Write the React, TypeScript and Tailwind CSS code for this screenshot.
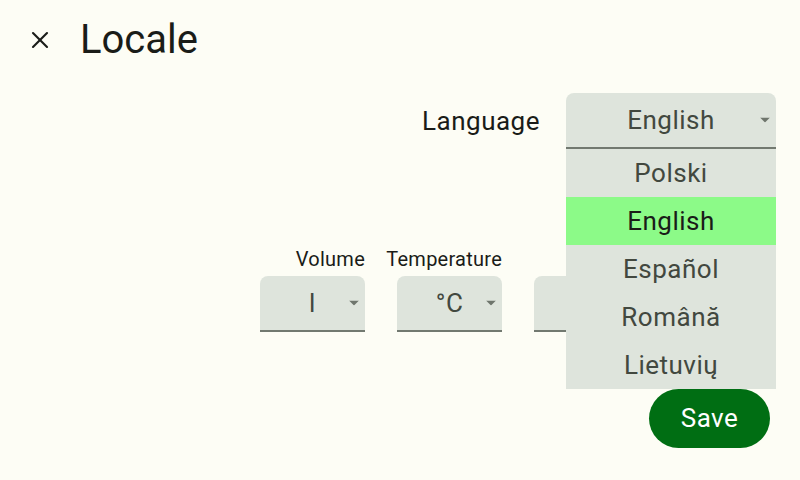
import { X } from "lucide-react";

const languages = ["Polski", "English", "Español", "Română", "Lietuvių"];

const units = [
  { label: "Volume", value: "l" },
  { label: "Temperature", value: "°C" },
  { label: "Length", value: "m" },
  { label: "Weight", value: "kg" },
];

function Caret() {
  return (
    <svg width="10" height="5" viewBox="0 0 10 5" className="absolute right-[6px] top-1/2 -translate-y-1/2">
      <path d="M0 0h10L5 5z" fill="#6f766d" />
    </svg>
  );
}

function Select({ value, width }: { value: string; width: string }) {
  return (
    <div
      className={`relative ${width} h-[56px] bg-[#dee4dc] rounded-t-lg border-b-2 border-[#727970] flex items-center justify-center text-[26px] tracking-[0.5px] text-[#42483f]`}
    >
      <span>{value}</span>
      <Caret />
    </div>
  );
}

export default function App() {
  return (
    <div
      className="w-[800px] h-[480px] bg-[#fdfdf5] text-[#1a1c18] flex flex-col overflow-hidden"
      style={{ fontFamily: "Roboto, 'Liberation Sans', sans-serif" }}
    >
      {/* Header */}
      <div className="flex items-center h-[80px] pl-[26px] gap-[26px] shrink-0">
        <X size={28} strokeWidth={1.8} className="text-[#1a1c18]" />
        <h1 className="text-[40px] leading-none">Locale</h1>
      </div>

      {/* Language */}
      <div className="flex justify-end items-center gap-[26px] pr-[24px] mt-[13px]">
        <span className="text-[26px] tracking-[0.5px]">Language</span>
        <div className="relative">
          <Select value="English" width="w-[210px]" />
          <ul className="absolute left-0 top-full w-[210px] bg-[#dee4dc] z-10">
            {languages.map((l) => (
              <li
                key={l}
                className={`h-12 flex items-center justify-center text-[26px] tracking-[0.5px] ${
                  l === "English" ? "bg-[#8cfa88] text-[#1a1c18]" : "text-[#42483f]"
                }`}
              >
                {l}
              </li>
            ))}
          </ul>
        </div>
      </div>

      {/* Units */}
      <div className="flex justify-end gap-[32px] pr-[24px] mt-[98px]">
        {units.map((u) => (
          <div key={u.label} className="w-[105px] flex flex-col items-end gap-[5px]">
            <span className="whitespace-nowrap text-[20px] leading-[24px] tracking-[0.25px]">{u.label}</span>
            <Select value={u.value} width="w-[105px]" />
          </div>
        ))}
      </div>

      {/* Footer */}
      <div className="flex justify-end pr-[30px] mt-auto mb-[32px]">
        <button
          type="button"
          className="w-[121px] h-[59px] rounded-full bg-[#006e13] text-white text-[26px] tracking-[0.5px]"
        >
          Save
        </button>
      </div>
    </div>
  );
}
